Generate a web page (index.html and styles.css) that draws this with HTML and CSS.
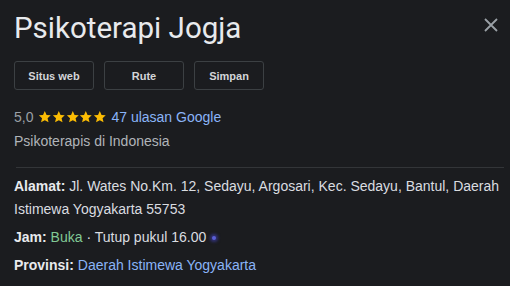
FILE: index.html
```html
<!DOCTYPE html>
<html lang="id">
<head>
<meta charset="utf-8">
<link rel="stylesheet" href="styles.css">
</head>
<body>
<div class="panel">
  <div class="header">
    <h1 class="title">Psikoterapi Jogja</h1>
    <span class="close" aria-label="Tutup">
      <svg width="14" height="14" viewBox="0 0 14 14"><path d="M1 1L13 13M13 1L1 13" stroke="#9aa0a6" stroke-width="1.8" fill="none"/></svg>
    </span>
  </div>
  <div class="actions">
    <span class="btn btn-wide">Situs web</span>
    <span class="btn btn-wide">Rute</span>
    <span class="btn">Simpan</span>
  </div>
  <div class="rating">
    <span class="score">5,0</span>
    <span class="stars">
      <svg class="star" viewBox="0 0 24 24"><path d="M12 1.8l3.1 6.9 7.4.7-5.6 5 1.7 7.4L12 17.9l-6.6 3.9 1.7-7.4-5.6-5 7.4-.7z"/></svg>
      <svg class="star" viewBox="0 0 24 24"><path d="M12 1.8l3.1 6.9 7.4.7-5.6 5 1.7 7.4L12 17.9l-6.6 3.9 1.7-7.4-5.6-5 7.4-.7z"/></svg>
      <svg class="star" viewBox="0 0 24 24"><path d="M12 1.8l3.1 6.9 7.4.7-5.6 5 1.7 7.4L12 17.9l-6.6 3.9 1.7-7.4-5.6-5 7.4-.7z"/></svg>
      <svg class="star" viewBox="0 0 24 24"><path d="M12 1.8l3.1 6.9 7.4.7-5.6 5 1.7 7.4L12 17.9l-6.6 3.9 1.7-7.4-5.6-5 7.4-.7z"/></svg>
      <svg class="star" viewBox="0 0 24 24"><path d="M12 1.8l3.1 6.9 7.4.7-5.6 5 1.7 7.4L12 17.9l-6.6 3.9 1.7-7.4-5.6-5 7.4-.7z"/></svg>
    </span>
    <a class="link">47 ulasan Google</a>
  </div>
  <div class="category">Psikoterapis di Indonesia</div>
  <div class="divider"></div>
  <div class="info">
    <div class="row"><b>Alamat:</b> Jl. Wates No.Km. 12, Sedayu, Argosari, Kec. Sedayu, Bantul, Daerah Istimewa Yogyakarta 55753</div>
    <div class="row"><b>Jam:</b> <span class="open">Buka</span> · Tutup pukul 16.00 <span class="caret"></span></div>
    <div class="row"><b>Provinsi:</b> <a class="link">Daerah Istimewa Yogyakarta</a></div>
  </div>
</div>
</body>
</html>
```
FILE: styles.css
```css
html, body {
  margin: 0;
  padding: 0;
  background: #1b1c1f;
}
.panel {
  width: 510px;
  height: 286px;
  box-sizing: border-box;
  padding: 0 6px 0 14px;
  font-family: "Liberation Sans", Arial, sans-serif;
  color: #dadce0;
  overflow: hidden;
}
.header {
  display: flex;
  justify-content: space-between;
  align-items: flex-start;
  height: 50px;
}
.title {
  margin: 11px 0 0;
  font-family: Roboto, "Open Sans", sans-serif;
  font-weight: 400;
  font-size: 29.5px;
  line-height: 34px;
  color: #e8eaed;
}
.close {
  margin: 18px 6px 0 0;
  display: block;
  line-height: 0;
}
.actions {
  display: flex;
  gap: 10px;
  margin-top: 11px;
}
.btn {
  box-sizing: border-box;
  width: 70px;
  height: 29px;
  border: 1px solid #3c4043;
  border-radius: 3px;
  display: flex;
  align-items: center;
  justify-content: center;
  font-size: 11px;
  font-weight: 700;
  color: #d3d5d8;
}
.btn-wide { width: 80px; }
.rating {
  margin-top: 18px;
  font-size: 14px;
  line-height: 18px;
  display: flex;
  align-items: center;
  gap: 4px;
}
.score { color: #9aa0a6; }
.stars {
  display: flex;
  gap: 0;
  margin: 0 1px;
}
.star {
  width: 13.6px;
  height: 13.6px;
  fill: #fbbc04;
}
.link { color: #8ab4f8; }
.category {
  margin-top: 6px;
  font-size: 14px;
  line-height: 18px;
  color: #b0b4b9;
}
.divider {
  height: 1px;
  background: #333538;
  margin: 17px 0 0 2px;
}
.info {
  margin-top: 7px;
  font-size: 14px;
  line-height: 23px;
  color: #dadce0;
}
.row { margin-bottom: 5px; }
.row b { color: #e8eaed; }
.open { color: #81c995; }
.caret {
  display: inline-block;
  width: 4px;
  height: 4px;
  border-radius: 50%;
  background: #5a5fd6;
  box-shadow: 0 0 3px 2px rgba(70, 70, 200, 0.5);
  vertical-align: middle;
  margin-left: 2px;
}
```
